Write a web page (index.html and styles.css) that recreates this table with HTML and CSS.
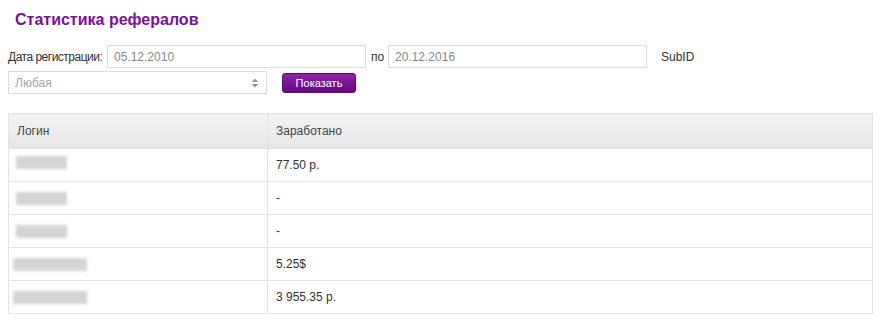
FILE: index.html
```html
<!DOCTYPE html>
<html lang="ru">
<head>
<meta charset="utf-8">
<title>Статистика рефералов</title>
<link rel="stylesheet" href="styles.css">
</head>
<body>
<div class="page">
  <h1 class="title">Статистика рефералов</h1>
  <form class="filters">
    <div class="row">
      <label class="lbl lbl-date">Дата регистрации:</label>
      <input class="field" type="text" value="05.12.2010">
      <span class="lbl lbl-to">по</span>
      <input class="field" type="text" value="20.12.2016">
      <span class="lbl lbl-sub">SubID</span>
    </div>
    <div class="row row2">
      <div class="select">
        <span class="select-text">Любая</span>
        <svg class="arrows" width="8" height="10" viewBox="0 0 8 10"><path d="M4 0.5 L7.5 4 H0.5 Z M4 9.5 L7.5 6 H0.5 Z" fill="#9a9a9a"/></svg>
      </div>
      <button class="btn" type="button">Показать</button>
    </div>
  </form>
  <table class="stats">
    <thead>
      <tr><th class="c1">Логин</th><th>Заработано</th></tr>
    </thead>
    <tbody>
      <tr><td class="c1"><span class="blur w1"></span></td><td>77.50 р.</td></tr>
      <tr><td class="c1"><span class="blur w1 s1"></span></td><td>-</td></tr>
      <tr><td class="c1"><span class="blur w1 s1"></span></td><td>-</td></tr>
      <tr><td class="c1"><span class="blur w2"></span></td><td>5.25$</td></tr>
      <tr><td class="c1"><span class="blur w2"></span></td><td>3 955.35 р.</td></tr>
    </tbody>
  </table>
</div>
</body>
</html>
```

FILE: styles.css
```css
* { box-sizing: border-box; }
html, body { margin: 0; padding: 0; background: #fff; }
body {
  font-family: "Liberation Sans", Arial, sans-serif;
  font-size: 12px;
  color: #333;
}
.page { padding: 0 8px; }
.title {
  margin: 0;
  padding: 11px 0 0 7px;
  height: 45px;
  font-size: 16px;
  font-weight: bold;
  color: #7a109e;
}
.filters { margin: 0; }
.row {
  display: flex;
  align-items: center;
  height: 23px;
}
.row2 { margin-top: 3px; }
.lbl { color: #333; white-space: nowrap; }
.lbl-date { width: 99px; letter-spacing: -0.5px; }
.lbl-to { width: 22px; padding-left: 5px; }
.lbl-sub { padding-left: 14px; }
.field {
  width: 259px;
  height: 23px;
  border: 1px solid #dcdcdc;
  padding: 0 6px;
  font-family: "Liberation Sans", Arial, sans-serif;
  font-size: 12px;
  color: #888;
  background: #fff;
  outline: none;
}
.select {
  width: 259px;
  height: 23px;
  border: 1px solid #dcdcdc;
  display: flex;
  align-items: center;
  justify-content: space-between;
  padding: 0 7px 0 6px;
  color: #a5a5a5;
}
.arrows { display: block; }
.btn {
  margin-left: 15px;
  width: 74px;
  height: 20px;
  border: 1px solid #5c0875;
  border-radius: 3px;
  background: linear-gradient(#8e22aa, #640a80);
  color: #fff;
  font-family: "Liberation Sans", Arial, sans-serif;
  font-size: 11px;
  padding: 0;
  margin-top: 1px;
}
.stats {
  margin-top: 19px;
  width: 865px;
  border-collapse: collapse;
  border: 1px solid #e3e3e3;
}
.stats th {
  height: 35px;
  text-align: left;
  font-weight: normal;
  color: #444;
  padding: 0 8px;
  background: linear-gradient(#f3f3f3, #e6e6e6);
  border: 1px solid #e3e3e3;
}
.stats td {
  height: 33px;
  padding: 0 8px;
  border: 1px solid #e3e3e3;
  color: #333;
}
.stats .c1 { width: 259px; }
.stats td.c1 { padding: 0 4px; vertical-align: middle; }
.blur {
  display: block;
  height: 13px;
  background: #d4d4d4;
  filter: blur(1.5px);
  margin-top: -6px;
}
.w1 { width: 51px; margin-left: 3px; }
.s1 { margin-top: 0; }
.w2 { width: 74px; margin-left: 0; margin-top: 0; }
```
